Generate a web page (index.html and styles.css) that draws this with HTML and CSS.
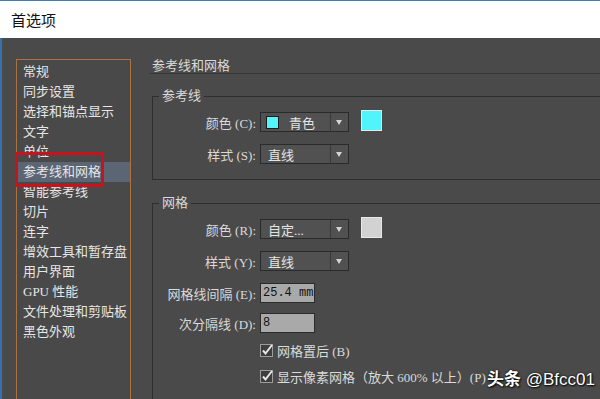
FILE: index.html
```html
<!DOCTYPE html>
<html lang="zh-CN">
<head>
<meta charset="utf-8">
<title>首选项</title>
<link rel="stylesheet" href="styles.css">
</head>
<body>
<div class="window">
  <div class="titlebar">首选项</div>
  <div class="main">
    <ul class="nav">
      <li>常规</li>
      <li>同步设置</li>
      <li>选择和锚点显示</li>
      <li>文字</li>
      <li>单位</li>
      <li class="active">参考线和网格</li>
      <li>智能参考线</li>
      <li>切片</li>
      <li>连字</li>
      <li>增效工具和暂存盘</li>
      <li>用户界面</li>
      <li>GPU 性能</li>
      <li>文件处理和剪贴板</li>
      <li>黑色外观</li>
    </ul>
    <div class="content">
      <div class="heading">参考线和网格</div>
      <fieldset class="group g1">
        <legend>参考线</legend>
        <div class="row first">
          <label class="lbl">颜色 (C):</label>
          <div class="select"><span class="chip"></span><span class="val chipval">青色</span><span class="arrow"></span></div>
          <span class="swatch cyan"></span>
        </div>
        <div class="row">
          <label class="lbl">样式 (S):</label>
          <div class="select"><span class="val">直线</span><span class="arrow"></span></div>
        </div>
      </fieldset>
      <fieldset class="group g2">
        <legend>网格</legend>
        <div class="row first">
          <label class="lbl">颜色 (R):</label>
          <div class="select"><span class="val">自定...</span><span class="arrow"></span></div>
          <span class="swatch grey"></span>
        </div>
        <div class="row">
          <label class="lbl">样式 (Y):</label>
          <div class="select"><span class="val">直线</span><span class="arrow"></span></div>
        </div>
        <div class="row">
          <label class="lbl">网格线间隔 (E):</label>
          <div class="input">25.4 mm</div>
        </div>
        <div class="row r4">
          <label class="lbl">次分隔线 (D):</label>
          <div class="input">8</div>
        </div>
        <div class="row check">
          <span class="lbl"></span>
          <svg class="cb" width="14" height="14" viewBox="0 0 14 14"><rect x="0.5" y="1.5" width="12" height="12" fill="#3e3e3e" stroke="#9c9c9c"/><path d="M3 7.5 L5.5 10.5 L12 2" fill="none" stroke="#e8e8e8" stroke-width="2"/></svg>
          <span class="cbtext">网格置后 (B)</span>
        </div>
        <div class="row check c2">
          <span class="lbl"></span>
          <svg class="cb" width="14" height="14" viewBox="0 0 14 14"><rect x="0.5" y="1.5" width="12" height="12" fill="#3e3e3e" stroke="#9c9c9c"/><path d="M3 7.5 L5.5 10.5 L12 2" fill="none" stroke="#e8e8e8" stroke-width="2"/></svg>
          <span class="cbtext">显示像素网格（放大 600% 以上）(P)</span>
        </div>
      </fieldset>
    </div>
  </div>
  <div class="annot"></div>
  <div class="watermark"><b>头条</b> @Bfcc01</div>
</div>
</body>
</html>
```

FILE: styles.css
```css
html, body {
  margin: 0;
  padding: 0;
  width: 600px;
  height: 399px;
  overflow: hidden;
  background: #4a4a4a;
}
.window {
  position: relative;
  width: 600px;
  height: 399px;
  overflow: hidden;
  display: flex;
  flex-direction: column;
  font-family: "Liberation Serif", "Noto Sans CJK SC", serif;
}
.titlebar {
  box-sizing: border-box;
  height: 38px;
  line-height: 37px;
  border-top: 1px solid #3f7fae;
  background: #ffffff;
  color: #111;
  font-family: "Noto Sans CJK SC", sans-serif;
  font-size: 15px;
  padding-left: 11px;
}
.main {
  flex: 1;
  display: flex;
  background: #4a4a4a;
  border-left: 2px solid #3574ab;
  min-height: 0;
}
.nav {
  list-style: none;
  margin: 21px 0 0 14px;
  padding: 2px 0 0 0;
  width: 115px;
  box-sizing: border-box;
  border: 1px solid #a9723f;
  border-bottom: none;
  background: #494949;
  font-size: 13px;
  color: #e6e6e6;
}
.nav li {
  height: 20px;
  line-height: 20px;
  padding-left: 6px;
  white-space: nowrap;
}
.nav li.active {
  background: #5b6574;
}
.content {
  flex: 1;
  margin-left: 19px;
  min-width: 0;
  color: #dadada;
  font-size: 13px;
}
.heading {
  margin-top: 20px;
  line-height: 15px;
  padding-left: 2px;
  border-bottom: 1px solid #363636;
  margin-right: -20px;
}
.group {
  margin: 14px -40px 0 2px;
  padding: 0 0 15px 6px;
  border: 1px solid #2e2e2e;
  min-width: 0;
}
.group legend {
  padding: 0 3px;
  line-height: 16px;
  font-size: 13px;
}
.g2 {
  margin-top: 15px;
}
.row {
  display: flex;
  align-items: center;
  height: 20px;
  margin-top: 12px;
}
.row.first {
  margin-top: 8px;
}
.row.r4 {
  margin-top: 10px;
}
.row.check {
  margin-top: 7px;
}
.row.check.c2 {
  margin-top: 6px;
}
.lbl {
  width: 97px;
  text-align: right;
  margin-right: 4px;
  white-space: nowrap;
  flex: none;
}
.select {
  position: relative;
  display: flex;
  align-items: center;
  width: 89px;
  height: 20px;
  box-sizing: border-box;
  border: 1px solid #2a2a2a;
  background: #515151;
  color: #e4e4e4;
}
.chip {
  width: 13px;
  height: 13px;
  box-sizing: border-box;
  margin-left: 5px;
  background: #55f4fd;
  border: 1px solid #1e1e1e;
}
.val {
  flex: 1;
  padding-left: 7px;
  white-space: nowrap;
}
.val.chipval {
  padding-left: 10px;
}
.arrow {
  width: 17px;
  height: 18px;
  border-left: 1px solid #3a3a3a;
  position: relative;
}
.arrow::after {
  content: "";
  position: absolute;
  left: 5px;
  top: 7px;
  border-left: 3.5px solid transparent;
  border-right: 3.5px solid transparent;
  border-top: 5px solid #d4d4d4;
}
.swatch {
  width: 21px;
  height: 21px;
  box-sizing: border-box;
  margin-left: 12px;
  margin-top: -3px;
  border: 1px solid #e8e8e8;
}
.swatch.cyan { background: #50f4fc; }
.swatch.grey { background: #d2d2d2; }
.input {
  width: 55px;
  height: 20px;
  box-sizing: border-box;
  border: 1px solid #2b2b2b;
  background: #a9a9a9;
  color: #111;
  font-family: "Liberation Mono", monospace;
  font-size: 12px;
  line-height: 18px;
  padding-left: 2px;
  white-space: nowrap;
}
.cb {
  flex: none;
}
.cbtext {
  margin-left: 3px;
  white-space: nowrap;
}
.annot {
  position: absolute;
  left: 15px;
  top: 152px;
  width: 89px;
  height: 35px;
  box-sizing: border-box;
  border: 3px solid #c8121c;
}
.watermark {
  position: absolute;
  left: 487px;
  top: 367px;
  font-family: "Liberation Sans", "Noto Sans CJK SC", sans-serif;
  font-size: 17px;
  line-height: 22px;
  color: #ffffff;
  text-shadow: 1px 1px 2px #000, 0 0 2px #000;
  white-space: nowrap;
}
.watermark b {
  font-family: "Noto Sans CJK SC", sans-serif;
  font-weight: 700;
}
```
